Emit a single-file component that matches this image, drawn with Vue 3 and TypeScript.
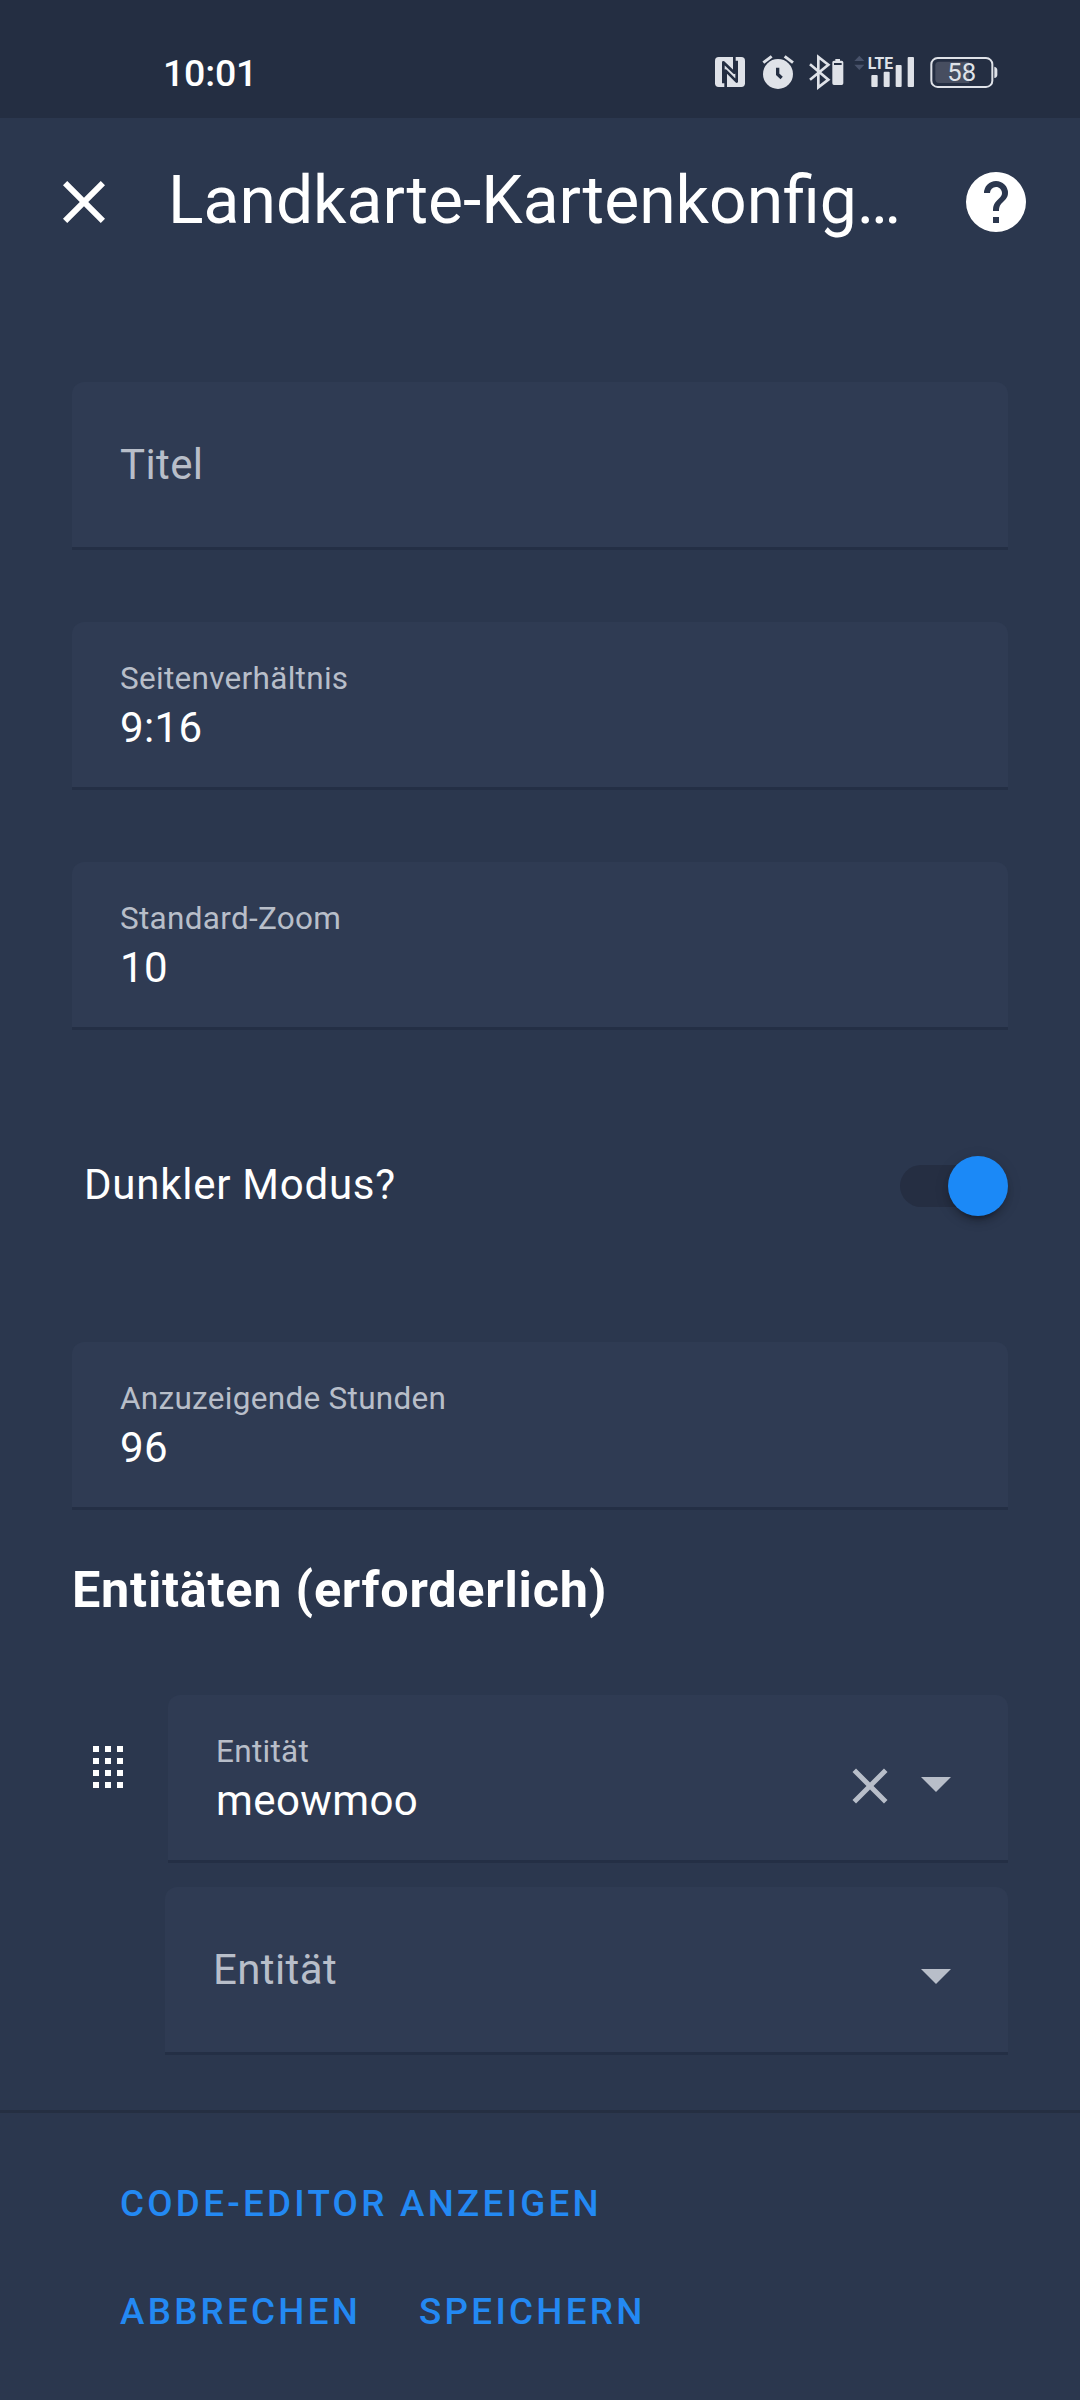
<script setup lang="ts">
import { ref } from 'vue'

interface Field {
  id: string
  label: string
  value: string
}

const title = 'Landkarte-Kartenkonfig…'

const fields = ref<Field[]>([
  { id: 'title', label: 'Titel', value: '' },
  { id: 'aspect', label: 'Seitenverhältnis', value: '9:16' },
  { id: 'zoom', label: 'Standard-Zoom', value: '10' },
])
const hours = ref<Field>({ id: 'hours', label: 'Anzuzeigende Stunden', value: '96' })
const entity = ref('meowmoo')
const darkMode = ref(true)

const closePath =
  'M19,6.41L17.59,5L12,10.59L6.41,5L5,6.41L10.59,12L5,17.59L6.41,19L12,13.41L17.59,19L19,17.59L13.41,12L19,6.41Z'
const helpPath =
  'M15.07,11.25L14.17,12.17C13.45,12.89 13,13.5 13,15H11V14.5C11,13.39 11.45,12.39 12.17,11.67L13.41,10.41C13.78,10.05 14,9.55 14,9C14,7.89 13.1,7 12,7A2,2 0 0,0 10,9H8A4,4 0 0,1 12,5A4,4 0 0,1 16,9C16,9.88 15.64,10.67 15.07,11.25M13,19H11V17H13M12,2A10,10 0 0,0 2,12A10,10 0 0,0 12,22A10,10 0 0,0 22,12C22,6.47 17.5,2 12,2Z'
const dragPath =
  'M7,5H9V7H7V5M11,5H13V7H11V5M15,5H17V7H15V5M7,9H9V11H7V9M11,9H13V11H11V9M15,9H17V11H15V9M7,13H9V15H7V13M11,13H13V15H11V13M15,13H17V15H15V13M7,17H9V19H7V17M11,17H13V19H11V17M15,17H17V19H15V17Z'
const menuDownPath = 'M7,10L12,15L17,10H7Z'
</script>

<template>
  <div class="screen">
    <div class="status">
      <span class="clock">10:01</span>
      <div class="status-icons">
        <!-- NFC -->
        <svg class="nfc" viewBox="105 72 90 108">
          <rect x="105" y="81" width="90" height="90" rx="11" fill="#dfe2e8" />
          <path
            d="M130,160V97L163,128V81M137,171V122L170,155V92"
            fill="none" stroke="#242e42" stroke-width="8" stroke-linejoin="round"
          />
        </svg>
        <!-- alarm -->
        <svg class="alarm" viewBox="246 72 98 108">
          <circle cx="294" cy="132" r="45" fill="#dfe2e8" />
          <path d="M250,98L275,79M339,98L314,79" stroke="#dfe2e8" stroke-width="9" fill="none" />
          <path d="M293,113V133L305,144" stroke="#242e42" stroke-width="10" fill="none" />
        </svg>
        <!-- bluetooth with device battery -->
        <svg class="bt" viewBox="386 72 104 108">
          <path
            d="M389,103L444,149L414,172V81L444,104L389,149"
            stroke="#dfe2e8" stroke-width="8" fill="none"
          />
          <path
            d="M465,87H479V92H484Q489,92 489,97V160Q489,165 484,165H461Q456,165 456,160V97Q456,92 461,92H465Z"
            fill="#dfe2e8"
          />
          <rect x="461" y="99" width="23" height="6" fill="#242e42" />
        </svg>
        <!-- mobile signal -->
        <svg class="signal" viewBox="522 72 182 108">
          <path d="M523,93L538,77L553,93ZM523,104H553L538,120Z" fill="#48526a" />
          <text x="563" y="116" class="lte" textLength="76" lengthAdjust="spacingAndGlyphs">LTE</text>
          <g fill="#dfe2e8">
            <rect x="574" y="135" width="19" height="36" rx="3" />
            <rect x="611" y="125" width="18" height="46" rx="3" />
            <rect x="647" y="105" width="18" height="66" rx="3" />
            <rect x="683" y="81" width="19" height="90" rx="3" />
          </g>
        </svg>
        <!-- phone battery -->
        <svg class="battery" viewBox="749 72 204 108">
          <path d="M765,106Q765,95 776,95H867V159H776Q765,159 765,148Z" fill="#474e60" />
          <rect x="753" y="84" width="183" height="87" rx="19" fill="none" stroke="#dfe2e8" stroke-width="6" />
          <path d="M942,110Q951,112 951,120V134Q951,142 942,144Z" fill="#dfe2e8" />
          <text x="844" y="154" class="pct" text-anchor="middle">58</text>
        </svg>
      </div>
    </div>

    <header class="header">
      <svg class="icon" viewBox="0 0 24 24"><path :d="closePath" /></svg>
      <h1>{{ title }}</h1>
      <svg class="icon" viewBox="0 0 24 24"><path :d="helpPath" /></svg>
    </header>

    <main class="form">
      <div v-for="f in fields" :key="f.id" class="field" :class="{ empty: !f.value }">
        <span class="label">{{ f.label }}</span>
        <span v-if="f.value" class="value">{{ f.value }}</span>
      </div>

      <div class="switch-row">
        <span>Dunkler Modus?</span>
        <div class="switch" :class="{ on: darkMode }"><i class="thumb"></i></div>
      </div>

      <div class="field">
        <span class="label">{{ hours.label }}</span>
        <span class="value">{{ hours.value }}</span>
      </div>

      <h3>Entitäten (erforderlich)</h3>

      <div class="entity">
        <svg class="icon handle" viewBox="0 0 24 24"><path :d="dragPath" /></svg>
        <div class="field picker">
          <div class="texts">
            <span class="label">Entität</span>
            <span class="value">{{ entity }}</span>
          </div>
          <svg class="clear" viewBox="0 0 24 24"><path :d="closePath" /></svg>
          <svg class="icon arrow" viewBox="0 0 24 24"><path :d="menuDownPath" /></svg>
        </div>
      </div>

      <div class="field picker empty add">
        <div class="texts"><span class="label">Entität</span></div>
        <svg class="icon arrow" viewBox="0 0 24 24"><path :d="menuDownPath" /></svg>
      </div>
    </main>

    <footer class="actions">
      <div class="row"><button>CODE-EDITOR ANZEIGEN</button></div>
      <div class="row">
        <button>ABBRECHEN</button>
        <button>SPEICHERN</button>
      </div>
    </footer>
  </div>
</template>

<style>
body {
  background: #2b374e;
}
</style>

<style scoped>
.screen {
  box-sizing: border-box;
  width: 1080px;
  height: 2400px;
  display: flex;
  flex-direction: column;
  overflow: hidden;
  background: #2b374e;
  color: #fff;
  font-family: Roboto, 'Noto Sans', sans-serif;
  font-size: 42px;
}
svg {
  display: block;
  flex: none;
}
.status {
  flex: none;
  box-sizing: border-box;
  height: 118px;
  padding: 48px 82px 0 163px;
  display: flex;
  justify-content: space-between;
  align-items: flex-start;
  background: #242e42;
}
.clock {
  font-size: 37.5px;
  font-weight: 500;
  line-height: 50px;
  letter-spacing: -0.2px;
}
.status-icons {
  display: flex;
  padding-top: 6px;
}
.status-icons svg {
  height: 36px;
}
.nfc {
  width: 30px;
}
.alarm {
  width: 32.67px;
  margin-left: 17px;
}
.bt {
  width: 34.67px;
  margin-left: 14px;
}
.signal {
  width: 60.67px;
  margin-left: 10.67px;
}
.battery {
  width: 68px;
  margin-left: 15px;
}
.lte {
  font: 700 48px Roboto, sans-serif;
  fill: #dfe2e8;
}
.pct {
  font: 400 77px Roboto, sans-serif;
  fill: #dfe2e8;
}
.header {
  flex: none;
  box-sizing: border-box;
  height: 168px;
  padding: 0 48px;
  display: flex;
  align-items: center;
}
.icon {
  width: 72px;
  height: 72px;
  fill: #fff;
}
h1 {
  flex: 1;
  margin: 0 0 2px 48px;
  font-size: 66px;
  font-weight: 400;
  line-height: 80px;
  white-space: nowrap;
}
.form {
  flex: none;
  box-sizing: border-box;
  height: 1824px;
  padding: 96px 72px 0;
  display: flex;
  flex-direction: column;
}
.field {
  flex: none;
  box-sizing: border-box;
  height: 168px;
  padding: 37px 48px 0;
  display: flex;
  flex-direction: column;
  background: #2f3b53;
  border-bottom: 3px solid #242f45;
  border-radius: 12px 12px 0 0;
  letter-spacing: 0.39px;
}
.field + .field {
  margin-top: 72px;
}
.label,
.value {
  display: block;
}
.label {
  font-size: 31.5px;
  line-height: 40px;
  letter-spacing: 0.295px;
  color: #b8bec9;
}
.value {
  margin-top: 5px;
  line-height: 48px;
}
.field.empty {
  padding-top: 0;
}
.empty .label {
  font-size: 42px;
  line-height: 165px;
  letter-spacing: 0.39px;
}
.switch-row {
  height: 168px;
  margin: 72px 0;
  padding-left: 12px;
  display: flex;
  align-items: center;
  justify-content: space-between;
  letter-spacing: 0.75px;
}
.switch-row span {
  line-height: 48px;
  margin-bottom: 3px;
}
.switch {
  width: 96px;
  height: 42px;
  margin-right: 12px;
  border-radius: 21px;
  background: #252e42;
  display: flex;
  align-items: center;
}
.thumb {
  flex: none;
  width: 60px;
  height: 60px;
  border-radius: 50%;
  background: #fff;
  box-shadow: 0 9px 3px -6px rgba(0, 0, 0, 0.2), 0 6px 6px rgba(0, 0, 0, 0.14), 0 3px 15px rgba(0, 0, 0, 0.12);
}
.switch.on .thumb {
  margin-left: 48px;
  background: #1b89f7;
}
h3 {
  margin: 50px 0 75px;
  font-size: 50.4px;
  font-weight: 700;
  line-height: 60px;
  letter-spacing: 0.75px;
}
.entity {
  display: flex;
  align-items: flex-start;
}
.handle {
  margin: 36px 24px 0 0;
}
.field.picker {
  flex-direction: row;
  align-items: flex-start;
  padding-right: 36px;
}
.entity .picker {
  flex: 1;
}
.texts {
  flex: 1;
}
.clear {
  width: 60px;
  height: 60px;
  margin-top: 24px;
  fill: #b8bec9;
}
.arrow {
  margin-top: 15px;
  fill: #b8bec9;
}
.add {
  margin: 24px 0 0 93px;
}
.add .arrow {
  margin-top: 52px;
}
.actions {
  flex: 1;
  border-top: 3px solid #252f42;
  padding: 37px 96px 0;
}
.row {
  display: flex;
  gap: 10px;
}
button {
  height: 108px;
  padding: 0 24px;
  border: 0;
  background: none;
  color: #2389f3;
  font: 500 36.75px/108px Roboto, sans-serif;
  letter-spacing: 3.28px;
}
</style>
